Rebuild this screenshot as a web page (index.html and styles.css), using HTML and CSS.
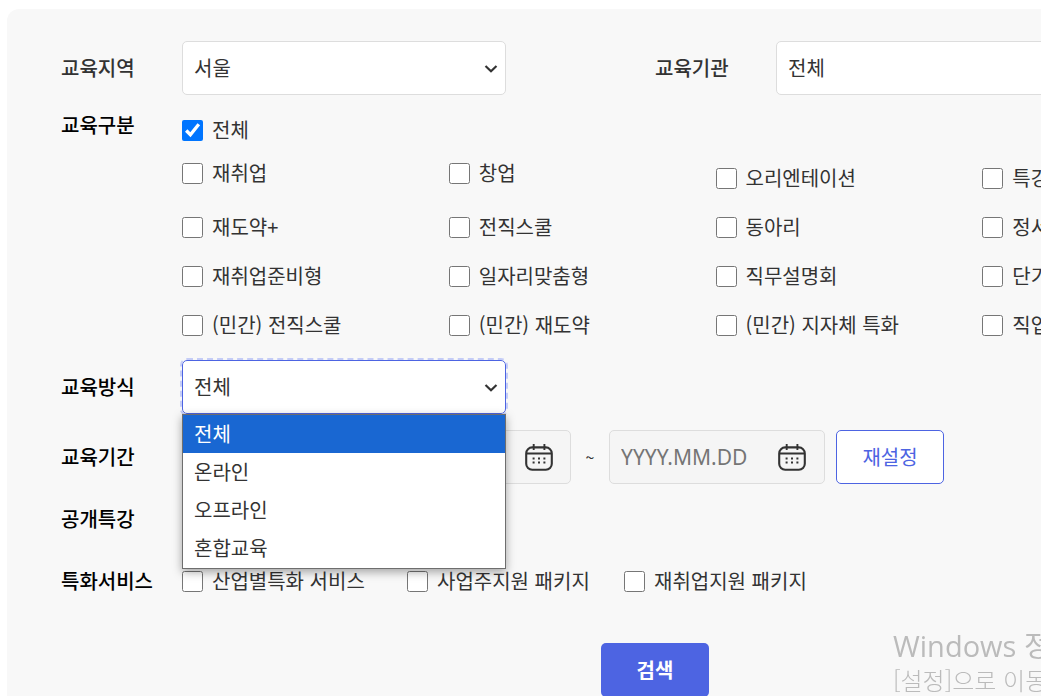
FILE: index.html
```html
<!DOCTYPE html>
<html lang="ko">
<head>
<meta charset="utf-8">
<title>교육 검색</title>
<meta name="viewport" content="width=device-width, initial-scale=1">
<link rel="stylesheet" href="styles.css">
</head>
<body>
<svg class="sprite" aria-hidden="true">
  <symbol id="chevron" viewBox="0 0 14 10"><path d="M1.5 2 L7 7.2 L12.5 2" fill="none" stroke="currentColor" stroke-width="2.2"/></symbol>
  <symbol id="calendar" viewBox="0 0 28 28">
    <rect x="1.2" y="4.4" width="25.6" height="22.4" rx="6" fill="none" stroke="currentColor" stroke-width="2.1"/>
    <path d="M1.5 10.5 H26.5 M8.7 1 V7 M19.4 1 V7" fill="none" stroke="currentColor" stroke-width="1.9"/>
    <path d="M7.6 15.5h2m3.4 0h2m3.4 0h2M7.6 19.5h2m3.4 0h2m3.4 0h2" fill="none" stroke="currentColor" stroke-width="2"/>
  </symbol>
</svg>
<form class="search-panel">
  <div class="row split">
    <div class="field">
      <label class="title soft" for="region">교육지역</label>
      <div class="select-box"><select id="region"><option>서울</option></select><svg class="chevron"><use href="#chevron"/></svg></div>
    </div>
    <div class="field">
      <label class="title soft" for="agency">교육기관</label>
      <div class="select-box"><select id="agency"><option>전체</option></select><svg class="chevron"><use href="#chevron"/></svg></div>
    </div>
  </div>

  <div class="row types">
    <span class="title" id="type-title">교육구분</span>
    <div class="type-body" role="group" aria-labelledby="type-title">
      <label class="check"><input type="checkbox" checked>전체</label>
      <div class="type-grid">
        <label class="check"><input type="checkbox">재취업</label>
        <label class="check"><input type="checkbox">창업</label>
        <label class="check low"><input type="checkbox">오리엔테이션</label>
        <label class="check low"><input type="checkbox">특강</label>
        <label class="check"><input type="checkbox">재도약+</label>
        <label class="check"><input type="checkbox">전직스쿨</label>
        <label class="check"><input type="checkbox">동아리</label>
        <label class="check"><input type="checkbox">정서</label>
        <label class="check"><input type="checkbox">재취업준비형</label>
        <label class="check"><input type="checkbox">일자리맞춤형</label>
        <label class="check"><input type="checkbox">직무설명회</label>
        <label class="check"><input type="checkbox">단기</label>
        <label class="check"><input type="checkbox">(민간) 전직스쿨</label>
        <label class="check"><input type="checkbox">(민간) 재도약</label>
        <label class="check"><input type="checkbox">(민간) 지자체 특화</label>
        <label class="check"><input type="checkbox">직업</label>
      </div>
    </div>
  </div>

  <div class="row method">
    <label class="title" for="method">교육방식</label>
    <div class="select-box open">
      <select id="method"><option>전체</option></select><svg class="chevron"><use href="#chevron"/></svg>
      <ul class="menu" role="listbox" aria-label="교육방식">
        <li class="option active" role="option" aria-selected="true">전체</li>
        <li class="option" role="option">온라인</li>
        <li class="option" role="option">오프라인</li>
        <li class="option" role="option">혼합교육</li>
      </ul>
    </div>
  </div>

  <div class="row period">
    <label class="title" for="start">교육기간</label>
    <div class="date start"><input id="start" type="text" aria-label="시작일"><svg class="calendar"><use href="#calendar"/></svg></div>
    <span class="tilde">~</span>
    <div class="date"><input type="text" placeholder="YYYY.MM.DD" aria-label="종료일"><svg class="calendar"><use href="#calendar"/></svg></div>
    <button class="reset" type="button">재설정</button>
  </div>

  <div class="row lecture"><span class="title">공개특강</span></div>

  <div class="row services">
    <span class="title" id="service-title">특화서비스</span>
    <div class="service-grid" role="group" aria-labelledby="service-title">
      <label class="check"><input type="checkbox">산업별특화 서비스</label>
      <label class="check"><input type="checkbox">사업주지원 패키지</label>
      <label class="check"><input type="checkbox">재취업지원 패키지</label>
    </div>
  </div>

  <button class="submit" type="submit">검색</button>
</form>
<aside class="notice">
  <p class="notice-title">Windows 정품</p>
  <p class="notice-text">[설정]으로 이동</p>
</aside>
</body>
</html>
```

FILE: styles.css
```css
* { box-sizing: border-box; }

html, body { overflow: hidden; }

body {
  margin: 0;
  padding: 9px 0 0 7px;
  height: 100vh;
  background: #fff;
  color: #333;
  font: 20px/30px "Noto Sans CJK KR", sans-serif;
}

input, select, button { font: inherit; color: inherit; }

.sprite { position: absolute; width: 0; height: 0; }

.search-panel {
  min-width: 1296px;
  padding: 32px 54px 40px;
  border-radius: 12px;
  background: #f8f8f8;
}

.row { display: flex; align-items: center; }
.split > .field { flex: 1; display: flex; align-items: center; }

.title {
  flex: none;
  width: 121px;
  color: #000;
  font-weight: 500;
}
.title.soft { color: #333; }

.select-box { position: relative; width: 324px; }
.select-box select {
  display: block;
  appearance: none;
  width: 100%;
  height: 54px;
  padding: 0 36px 0 11px;
  border: 1px solid #ddd;
  border-radius: 5px;
  background: #fff;
}
.chevron {
  position: absolute;
  top: 23px;
  right: 8px;
  width: 14px;
  height: 10px;
  pointer-events: none;
}
.open select {
  border-color: #4d64e2;
  outline: 2px dashed #c5cdf7;
}

.menu {
  position: absolute;
  z-index: 2;
  top: 100%;
  left: 0;
  width: 100%;
  margin: 0;
  padding: 0 0 1px;
  border: 1px solid #6e6e6e;
  background: #fff;
  box-shadow: 0 3px 9px rgba(0, 0, 0, .35);
  list-style: none;
}
.option { padding: 4px 11px; }
.option.active { background: #1967d2; color: #fff; }

.types { align-items: flex-start; padding-top: 15px; }
.type-body { flex: 1; padding-top: 5px; }
.type-grid {
  display: grid;
  grid-template-columns: repeat(4, 1fr);
  row-gap: 19px;
  margin-top: 13px;
}
.check { display: flex; align-items: center; align-self: start; gap: 9px; white-space: nowrap; }
.check.low { padding-top: 5px; }
.check input { flex: none; width: 21px; height: 21px; margin: 0; }

.method { margin-top: 20px; }

.period { margin-top: 16px; }
.date {
  display: flex;
  align-items: center;
  width: 216px;
  height: 54px;
  padding: 0 18px 0 11px;
  border: 1px solid #ddd;
  border-radius: 5px;
  background: #f5f5f5;
}
.date.start { width: 389px; padding-right: 17px; }
.date input {
  flex: 1;
  min-width: 0;
  padding: 0;
  border: 0;
  outline: 0;
  background: none;
  font: 21px/30px "Noto Sans", sans-serif;
}
.date input::placeholder { color: #757575; opacity: 1; }
.calendar { flex: none; width: 28px; height: 28px; }
.tilde { width: 38px; text-align: center; font-size: 16px; }
.reset {
  width: 108px;
  height: 54px;
  margin-left: 11px;
  padding: 0;
  border: 1px solid #4d64e2;
  border-radius: 5px;
  background: #fff;
  color: #4d64e2;
}

.lecture { margin-top: 20px; }

.services { margin-top: 32px; }
.service-grid { display: grid; grid-template-columns: 225px 217px auto; }

.submit {
  display: block;
  width: 108px;
  height: 54px;
  margin: 47px auto 0;
  padding: 0;
  border: 0;
  border-radius: 5px;
  background: #4d64e2;
  color: #fff;
  font-weight: 700;
}

.notice {
  position: fixed;
  right: 0;
  bottom: 0;
  width: 148px;
  overflow: hidden;
  color: #bbb;
  white-space: nowrap;
  pointer-events: none;
}
.notice p { margin: 0; }
.notice-title { font: 29px/36px "Open Sans", "Noto Sans CJK KR", sans-serif; }
.notice-text { font-size: 24px; line-height: 32px; font-weight: 300; }
```
